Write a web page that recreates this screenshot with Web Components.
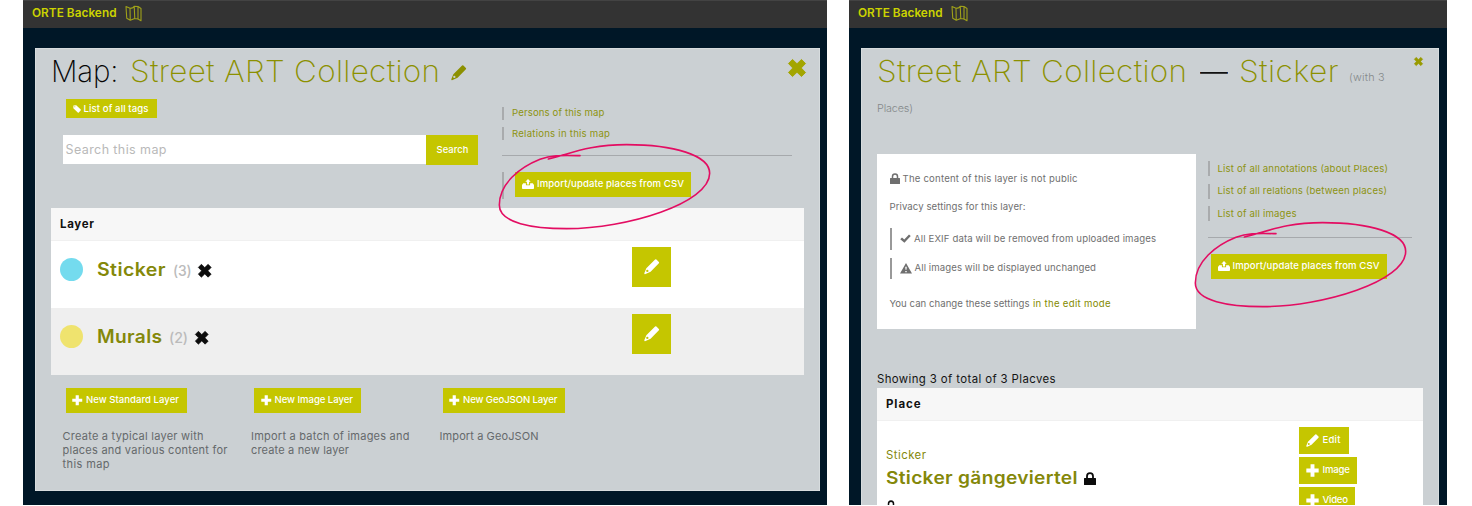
<!DOCTYPE html>
<html lang="en">
<head>
<meta charset="utf-8">
<title>ORTE Backend</title>
<style>
  html, body { margin: 0; height: 100%; overflow: hidden; background: #fff; }
  body { font-family: Inter, "Liberation Sans", sans-serif; }
</style>
</head>
<body>
<orte-app></orte-app>
<script>
const define = (name, html, init) => {
  const template = document.createElement('template');
  template.innerHTML = html;
  customElements.define(name, class extends HTMLElement {
    connectedCallback() {
      if (this.shadowRoot) return;
      this.attachShadow({ mode: 'open' }).append(template.content.cloneNode(true));
      if (init) init.call(this, this.shadowRoot);
    }
  });
};

/* One line of text, widened and tracked to fill the width given in w. */
define('fit-text', `
<style>
  :host { display: block; flex: none; white-space: nowrap; line-height: 14px; font-size: 9.6px; }
  span { display: inline-block; transform-origin: 0 50%; }
</style><span><slot></slot></span>`, function (root) {
  const w = parseFloat(this.getAttribute('w'));
  const size = parseFloat(this.getAttribute('size') || 9.6);
  this.style.fontSize = size + 'px';
  this.style.fontWeight = this.getAttribute('weight') || 400;
  this.style.width = w + 'px';
  const span = root.querySelector('span');
  const natural = span.getBoundingClientRect().width;
  const n = this.textContent.length;
  const stretch = size > 14 ? Math.pow(w / natural, 0.7) : 1;
  if (stretch !== 1) span.style.transform = 'scaleX(' + stretch + ')';
  span.style.letterSpacing = ((w / stretch - natural) / Math.max(1, n - 1)) + 'px';
});

const ICONS = {
  x: ['0 0 20 20', '<path d="M5 0.5 10 5.3 15 0.5 19.5 5 14.7 10 19.5 15 15 19.5 10 14.7 5 19.5 0.5 15 5.3 10 0.5 5z" fill="currentColor" stroke="currentColor" stroke-linejoin="round"/>'],
  plus: ['0 0 20 20', '<path d="M7 .5h6V7h6.500v6H13v6.500H7V13H.5V7H7z" fill="currentColor"/>'],
  pencil: ['0 0 20 20', '<path fill-rule="evenodd" d="M14.300 .8Q15.200 0 16 .8l3.200 3.200q.8.8 0 1.600L8.500 16.500 2 19.500Q0 20 .5 18L3 11.800zM2.800 15.400a1.500 1.500 0 1 0 3 0a1.500 1.500 0 1 0-3 0z" fill="currentColor"/>'],
  tag: ['0 0 20 20', '<path fill-rule="evenodd" d="M1 1.500 8 .5 19.500 11.500Q20 13 19 14L14.500 19Q13 20 12 19L.8 8zM3.300 4.500a1.300 1.300 0 1 0 2.600 0a1.300 1.300 0 1 0-2.600 0z" fill="currentColor"/>'],
  upload: ['0 0 20 20', '<path d="M10 0 14.500 5.500H11.800V11H8.200V5.500H5.500z" fill="currentColor"/><path d="M2 8.500H6.500V12.500H13.500V8.500H18L20 12V18.500Q20 20 18.500 20H1.500Q0 20 0 18.500V12z" fill="currentColor"/>'],
  lock: ['0 0 20 22', '<path fill-rule="evenodd" d="M3.500 10V7a6.500 6.500 0 0 1 13 0v3H19q1 0 1 1v10q0 1-1 1H1q-1 0-1-1V11q0-1 1-1zM6.500 10h7V7a3.500 3.500 0 0 0-7 0z" fill="currentColor"/>'],
  check: ['0 0 22 18', '<path d="M0.500 10.500 4 7l4.500 4L18 .8 21.500 4 8.800 17.500z" fill="currentColor"/>'],
  warn: ['0 0 22 20', '<path fill-rule="evenodd" d="M11 0 22 20H0zM9.600 7l.5 6h1.800l.5-6zM9.700 15v2.500h2.600V15z" fill="currentColor"/>'],
  map: ['0 0 34 34', '<path d="M2 3 10 6.500Q17 6.500 18.500 2.500L26 3 32 7V31.500L26 28 19.500 27 10.500 30.500 3.500 26.500zM10 6.500 10.500 30.500M18.500 3 19.500 27M26 3V28" fill="none" stroke="currentColor" stroke-width="2.200" stroke-linejoin="round"/>']
};
define('orte-icon', `<style>:host{display:block;flex:none}svg{display:block;width:100%;height:100%;overflow:visible}</style><svg preserveAspectRatio="none"></svg>`, function (root) {
  const [box, shape] = ICONS[this.getAttribute('name')];
  const svg = root.querySelector('svg');
  svg.setAttribute('viewBox', box);
  svg.innerHTML = shape;
  this.style.width = this.getAttribute('w') + 'px';
  this.style.height = (this.getAttribute('h') || this.getAttribute('w')) + 'px';
});

define('orte-button', `
<style>
  :host { display: flex; flex: none; align-items: center; box-sizing: border-box; background: #c5c600; color: #fff; gap: var(--gap, 4px); padding-left: var(--pad, 7px); }
</style><slot></slot>`);

define('orte-link', `
<style>
  :host { display: flex; align-items: center; box-sizing: border-box; border-left: 2px solid #a9abad; padding-left: 8px; color: #8d9311; }
</style><slot></slot>`);

/* Hand-drawn marker ring laid over the import button. */
define('marker-ring', `
<style>
  :host { position: absolute; width: 212px; height: 86px; pointer-events: none; z-index: 2; }
  svg { display: block; width: 100%; height: 100%; overflow: visible; }
</style>
<svg viewBox="87 312 636 258"><path d="M330 347C270 346 245 345 210 358C150 382 88 430 88 495C88 550 190 566 290 566C470 566 719 490 719 400C719 345 610 314 470 314C355 314 300 342 235 357" fill="none" stroke="#e30d62" stroke-width="4.800" stroke-linecap="round" stroke-linejoin="round"/></svg>`);

define('orte-window', `
<style>
  :host { display: flex; flex-direction: column; height: 505px; overflow: hidden; background: #001727; box-sizing: border-box; }
  header { flex: none; height: 28px; background: #333; border-top: 1px solid #434343; box-sizing: border-box; display: flex; align-items: flex-start; padding: 4px 0 0 9px; color: #ccd300; gap: 8.500px; }
  header fit-text { padding-top: .5px; }
  header orte-icon { color: #9fa11a; }
  main { flex: none; position: relative; margin: 20px 0 0 12px; box-sizing: border-box; background: #cbd0d3; box-shadow: 0 0 0 .5px #e3e7ea inset; }
</style>
<header><fit-text w="84.500" size="11.800" weight="600">ORTE Backend</fit-text><orte-icon name="map" w="17" h="17"></orte-icon></header>
<main><slot></slot></main>`, function (root) {
  const main = root.querySelector('main');
  main.style.width = this.getAttribute('card-width') + 'px';
  main.style.height = this.getAttribute('card-height') + 'px';
});

define('layer-row', `
<style>
  :host { display: flex; box-sizing: border-box; height: 67px; padding: 6px 0 0 8.500px; background: var(--row, #fff); }
  .dot { flex: none; width: 23.500px; height: 23.500px; border-radius: 50%; margin-top: 10.500px; background: var(--dot); }
  .name { display: flex; align-items: center; height: 46px; width: 535px; margin-left: 14px; gap: 7px; color: #84880a; }
  .name orte-icon { color: #0c0c0c; margin-top: 2px; }
  orte-button { width: 39px; height: 40px; --pad: 11.500px; }
</style>
<div class="dot"></div>
<div class="name"><slot></slot><orte-icon name="x" w="13.500"></orte-icon></div>
<orte-button><orte-icon name="pencil" w="15.500"></orte-icon></orte-button>`);

define('new-layer', `
<style>
  :host { display: block; flex: none; width: 188.500px; color: #65696b; }
  orte-button { height: 25px; margin: 0 0 16.500px 3px; --pad: 6.500px; --gap: 3.500px; }
</style>
<orte-button><orte-icon name="plus" w="10.500"></orte-icon><slot name="label"></slot></orte-button>
<slot></slot>`, function (root) {
  root.querySelector('orte-button').style.width = this.getAttribute('button-width') + 'px';
});

define('map-page', `
<style>
  :host { display: block; padding: 0 16px; }
  h1 { margin: 0; height: 47px; display: flex; align-items: center; font-weight: 300; }
  h1 fit-text { margin-top: -2px; }
  .olive { color: #8c9000; }
  .close { margin-left: auto; margin-right: -2px; margin-top: -7px; color: #a3a500; }
  .top { display: grid; grid-template-columns: 451px 290px; height: 113px; }
  .tags { width: 91px; height: 19px; margin: 4px 0 16.500px 14.500px; --gap: 3px; }
  .search { display: flex; align-items: center; margin-left: 12px; }
  .field { width: 363px; height: 29px; box-sizing: border-box; background: #fff; color: #b9b9b9; display: flex; align-items: center; padding-left: 2.500px; }
  .go { width: 52px; height: 30px; --pad: 10.500px; }
  .side orte-link { height: 13px; }
  .links { display: grid; gap: 7.500px; padding-top: 11.500px; }
  hr { border: 0; height: 1px; background: #a6a9ac; margin: 15px 0 15.500px; }
  .side orte-link.import { height: 27.500px; padding-left: 11px; align-items: flex-start; }
  .import orte-button { width: 176px; height: 25px; --gap: 3px; }
  marker-ring { left: 464px; top: 96px; }
  .head { background: #f7f7f7; height: 33px; display: flex; align-items: center; padding-left: 9px; box-sizing: border-box; border-bottom: 1px solid #f0f0f0; color: #111; }
  .new { display: flex; margin: 12.500px 0 0 11.500px; }
  .count { color: #bbb; margin-top: 2px; }
</style>
<h1><fit-text w="67.500" size="30" weight="250" style="color:#050505">Map:</fit-text>
<fit-text class="olive" w="310" size="30" weight="250" style="margin-left:11.500px">Street ART Collection</fit-text>
<orte-icon class="olive" name="pencil" w="15.500" style="margin:2px 0 0 10.500px"></orte-icon>
<orte-icon class="close" name="x" w="18"></orte-icon></h1>
<div class="top">
  <div>
    <orte-button class="tags"><orte-icon name="tag" w="8"></orte-icon><fit-text w="65" weight="500">List of all tags</fit-text></orte-button>
    <div class="search"><div class="field"><fit-text w="101" size="12.500">Search this map</fit-text></div><orte-button class="go"><fit-text w="32" size="9.400" weight="500">Search</fit-text></orte-button></div>
  </div>
  <div class="side">
    <div class="links">
      <orte-link><fit-text w="92.500">Persons of this map</fit-text></orte-link>
      <orte-link><fit-text w="98">Relations in this map</fit-text></orte-link>
    </div>
    <hr>
    <orte-link class="import"><orte-button><orte-icon name="upload" w="12" h="10"></orte-icon><fit-text w="147" weight="500">Import/update places from CSV</fit-text></orte-button></orte-link>
  </div>
</div>
<marker-ring></marker-ring>
<div class="head"><fit-text w="34" size="11.500" weight="700">Layer</fit-text></div>
<layer-row style="--dot:#74dbee"><fit-text w="68.500" size="18" weight="600">Sticker</fit-text><fit-text class="count" w="18.500" size="14.500" weight="500">(3)</fit-text></layer-row>
<layer-row style="--dot:#efe36e;--row:#efefef"><fit-text w="65" size="18" weight="600">Murals</fit-text><fit-text class="count" w="19" size="14.500" weight="500">(2)</fit-text></layer-row>
<div class="new">
  <new-layer button-width="121"><fit-text slot="label" w="93" weight="500">New Standard Layer</fit-text>
    <fit-text w="141" size="11">Create a typical layer with</fit-text><fit-text w="165" size="11">places and various content for</fit-text><fit-text w="47" size="11">this map</fit-text></new-layer>
  <new-layer button-width="107"><fit-text slot="label" w="78.500" weight="500">New Image Layer</fit-text>
    <fit-text w="158.500" size="11">Import a batch of images and</fit-text><fit-text w="98" size="11">create a new layer</fit-text></new-layer>
  <new-layer button-width="122"><fit-text slot="label" w="94.500" weight="500">New GeoJSON Layer</fit-text>
    <fit-text w="99" size="11">Import a GeoJSON</fit-text></new-layer>
</div>`);

define('layer-page', `
<style>
  :host { display: block; padding: 0 16px; }
  h1 { margin: 0; height: 47px; display: flex; align-items: center; font-weight: 300; color: #8c9000; }
  h1 fit-text { margin-top: -2px; }
  .grey { color: #84888a; }
  .close { margin: -20px 0 0 auto; color: #989a00; }
  .top { display: grid; grid-template-columns: 318.500px 204px; column-gap: 12px; margin-top: 37.500px; height: 175px; }
  .box { background: #fff; box-sizing: border-box; padding: 18px 0 0 12.500px; color: #6f6f6f; }
  .line { display: flex; align-items: center; height: 14px; }
  .quote { border-color: #999; height: 21.500px; padding-left: 8px; color: #6f6f6f; }
  .links { display: grid; gap: 7.500px; padding-top: 7.500px; }
  .links orte-link { height: 15px; }
  hr { border: 0; height: 1px; background: #a6a9ac; margin: 16px 0 15.500px; }
  .csv { width: 176px; height: 25px; margin-left: 3px; --gap: 3px; }
  marker-ring { left: 334px; top: 174px; }
  .show { height: 16px; display: flex; align-items: center; margin: 42.500px 0 1px; color: #141414; }
  .head { background: #f7f7f7; height: 33px; display: flex; align-items: center; padding-left: 9px; box-sizing: border-box; border-bottom: 1px solid #f0f0f0; color: #111; }
  .row { display: grid; grid-template-columns: 413px auto; background: #fff; height: 90px; padding-left: 9px; overflow: hidden; color: #84880a; }
  .acts { display: grid; grid-auto-rows: 26.500px; gap: 3.500px; padding-top: 6px; --pad: 7px; --gap: 3.500px; }
  .place { display: flex; align-items: center; gap: 6px; height: 22px; margin-top: 5px; }
  .place orte-icon, .last { color: #0c0c0c; }
</style>
<h1><fit-text w="310" size="30" weight="250">Street ART Collection</fit-text>
<fit-text w="27" size="30" weight="300" style="color:#111;margin-left:13px">—</fit-text>
<fit-text w="99.500" size="30" weight="250" style="margin-left:12px">Sticker</fit-text>
<fit-text class="grey" w="35.500" size="10.800" weight="300" style="margin:12px 0 0 10.500px">(with 3</fit-text>
<orte-icon class="close" name="x" w="9"></orte-icon></h1>
<fit-text class="grey" w="36" size="10.800" weight="300" style="margin-top:7px">Places)</fit-text>
<div class="top">
  <div class="box">
    <div class="line"><orte-icon name="lock" w="10" h="11"></orte-icon><fit-text w="175" style="margin-left:3px">The content of this layer is not public</fit-text></div>
    <div class="line" style="margin-top:14.500px"><fit-text w="136">Privacy settings for this layer:</fit-text></div>
    <orte-link class="quote" style="margin-top:14px"><orte-icon name="check" w="11" h="9"></orte-icon><fit-text w="242" style="margin-left:3.500px">All EXIF data will be removed from uploaded images</fit-text></orte-link>
    <orte-link class="quote" style="margin-top:8px"><orte-icon name="warn" w="12" h="10.500"></orte-icon><fit-text w="181.500" style="margin-left:3px">All images will be displayed unchanged</fit-text></orte-link>
    <div class="line" style="margin-top:17.500px"><fit-text w="140">You can change these settings</fit-text><fit-text w="77.500" style="margin-left:3.500px;color:#848a00">in the edit mode</fit-text></div>
  </div>
  <div>
    <div class="links">
      <orte-link><fit-text w="170.500">List of all annotations (about Places)</fit-text></orte-link>
      <orte-link><fit-text w="169.500">List of all relations (between places)</fit-text></orte-link>
      <orte-link><fit-text w="79">List of all images</fit-text></orte-link>
    </div>
    <hr>
    <orte-button class="csv"><orte-icon name="upload" w="12" h="10"></orte-icon><fit-text w="147" weight="500">Import/update places from CSV</fit-text></orte-button>
  </div>
</div>
<marker-ring></marker-ring>
<div class="show"><fit-text w="178.500" size="11.400">Showing 3 of total of 3 Placves</fit-text></div>
<div class="head"><fit-text w="34.500" size="11.500" weight="700">Place</fit-text></div>
<div class="row">
  <div>
    <fit-text w="40" size="11.400" style="margin-top:27px">Sticker</fit-text>
    <div class="place"><fit-text w="191.500" size="17.800" weight="600">Sticker gängeviertel</fit-text><orte-icon name="lock" w="12" h="13"></orte-icon></div>
    <orte-icon class="last" name="lock" w="10" h="12" style="margin-top:11px"></orte-icon>
  </div>
  <div class="acts">
    <orte-button style="width:49.500px"><orte-icon name="pencil" w="13"></orte-icon><fit-text w="18" weight="500">Edit</fit-text></orte-button>
    <orte-button style="width:58px"><orte-icon name="plus" w="13"></orte-icon><fit-text w="27.500" weight="500">Image</fit-text></orte-button>
    <orte-button style="width:56px"><orte-icon name="plus" w="13"></orte-icon><fit-text w="25.500" weight="500">Video</fit-text></orte-button>
  </div>
</div>`);

define('orte-app', `
<style>:host { display: grid; grid-template-columns: 804px 598px; column-gap: 22px; padding-left: 23px; }</style>
<orte-window card-width="785" card-height="443"><map-page></map-page></orte-window>
<orte-window card-width="578" card-height="480"><layer-page></layer-page></orte-window>`);
</script>
</body>
</html>
